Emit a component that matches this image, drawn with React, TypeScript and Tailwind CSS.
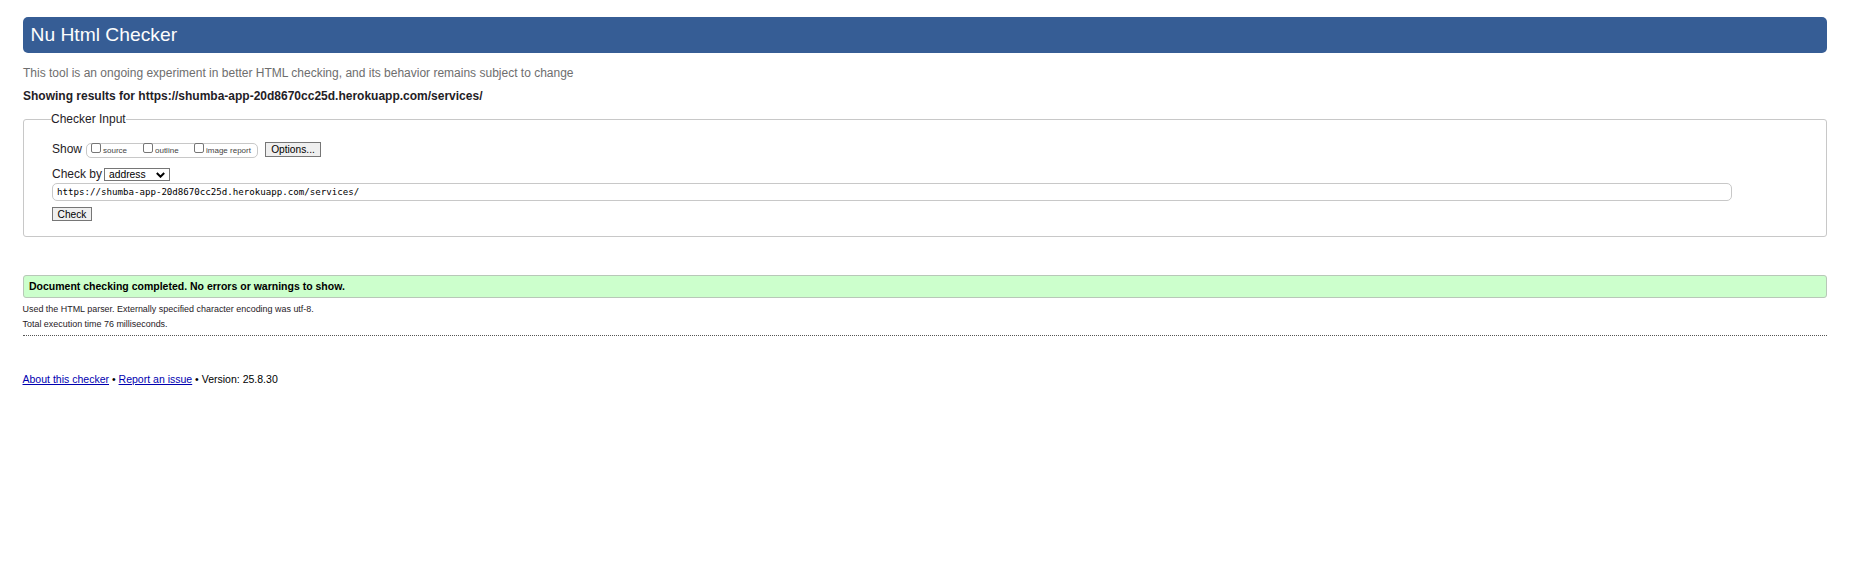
import React from "react";

const font = "font-['Liberation_Sans',Arial,sans-serif]";

function ShowOption({ label, className }: { label: string; className: string }) {
  return (
    <label className={`flex h-full items-start ${className}`}>
      <input
        type="checkbox"
        className="-mt-px h-[10px] w-[10px] shrink-0 appearance-none rounded-[2px] border border-[#767676] bg-white"
      />
      <span className="ml-[2px] mt-[1px] whitespace-nowrap text-[8px] leading-[12px] text-[#444]">{label}</span>
    </label>
  );
}

export default function App() {
  return (
    <div className={`${font} min-h-[578px] bg-white pl-[23px] pr-[39px] pt-[17px] text-[#1f2126]`}>
      <h1 className="h-9 rounded-[5px] bg-[#365d95] pl-[7.5px] text-[19.25px] leading-[35px] text-[#fdfdfd]">
        Nu Html Checker
      </h1>
      <p className="mt-[9px] h-[22px] whitespace-nowrap text-[12px] leading-[22px] text-[#6e6e6e]">
        This tool is an ongoing experiment in better HTML checking, and its behavior remains subject to change
      </p>
      <h2 className="h-[23px] whitespace-nowrap text-[12px] font-bold leading-[24px]">
        Showing results for https://shumba-app-20d8670cc25d.herokuapp.com/services/
      </h2>
      <form onSubmit={(e) => e.preventDefault()}>
        <fieldset className="mt-[5px] h-[125px] rounded-[3px] border border-[#c8c8c8] pl-[28px]">
          <legend className="-ml-px h-[15px] text-[12px] leading-[15px]">Checker Input</legend>
          <div className="mt-[15px] flex h-[16px] items-start">
            <span className="w-[34px] text-[12px] leading-[15px]">Show</span>
            <div className="mt-px flex h-[15px] w-[172px] rounded-[5px] border border-[#c8c8c8] pl-[4px]">
              <ShowOption label="source" className="w-[52px]" />
              <ShowOption label="outline" className="w-[51px]" />
              <ShowOption label="image report" className="" />
            </div>
            <button className="ml-[7px] h-[15px] w-[56px] border border-[#767676] bg-[#efefef] text-[10.2px] leading-[13px] text-black">
              Options...
            </button>
          </div>
          <div className="mt-[9px] flex h-[16px] items-start">
            <span className="w-[52px] whitespace-nowrap text-[12px] leading-[15px]">Check by</span>
            <button
              type="button"
              className="mt-px flex h-[13px] w-[66px] items-center justify-between border border-[#767676] bg-white pl-1 pr-[4px] text-[10.3px] leading-[11px] text-black"
            >
              address
              <svg width="9" height="6" viewBox="0 0 9 6" fill="none" stroke="black" strokeWidth="2">
                <path d="M.8 1l3.7 3.7L8.2 1" />
              </svg>
            </button>
          </div>
          <input
            type="text"
            defaultValue="https://shumba-app-20d8670cc25d.herokuapp.com/services/"
            className="block h-[18px] w-[1680px] rounded-[5px] border border-[#c8c8c8] bg-white pl-1 font-['DejaVu_Sans_Mono',monospace] text-[9.13px] leading-[16px] text-black"
          />
          <button className="mt-[6px] block h-[14px] w-[40px] border border-[#767676] bg-[#efefef] pt-px text-[10.2px] leading-[11px] text-black">
            Check
          </button>
        </fieldset>
      </form>
      <p className="mt-[38px] h-[23px] rounded-[3px] border border-[#b8c8b8] bg-[#ccffcc] pl-[5px] text-[10.5px] font-bold leading-[21px] text-black">
        Document checking completed. No errors or warnings to show.
      </p>
      <div className="-ml-[0.5px] pt-[4px] text-[8.95px] leading-[15px]">
        <p>Used the HTML parser. Externally specified character encoding was utf-8.</p>
        <p>Total execution time 76 milliseconds.</p>
      </div>
      <hr className="mt-[3px] border-0 border-b border-dotted border-[#555]" />
      <footer className="-ml-[0.5px] mt-[35px] text-[10.52px] leading-[16px] text-black">
        <a href="#about" className="text-[#0000b0] underline">About this checker</a>
        {" • "}
        <a href="#issue" className="text-[#0000b0] underline">Report an issue</a>
        {" • "}Version: 25.8.30
      </footer>
    </div>
  );
}
